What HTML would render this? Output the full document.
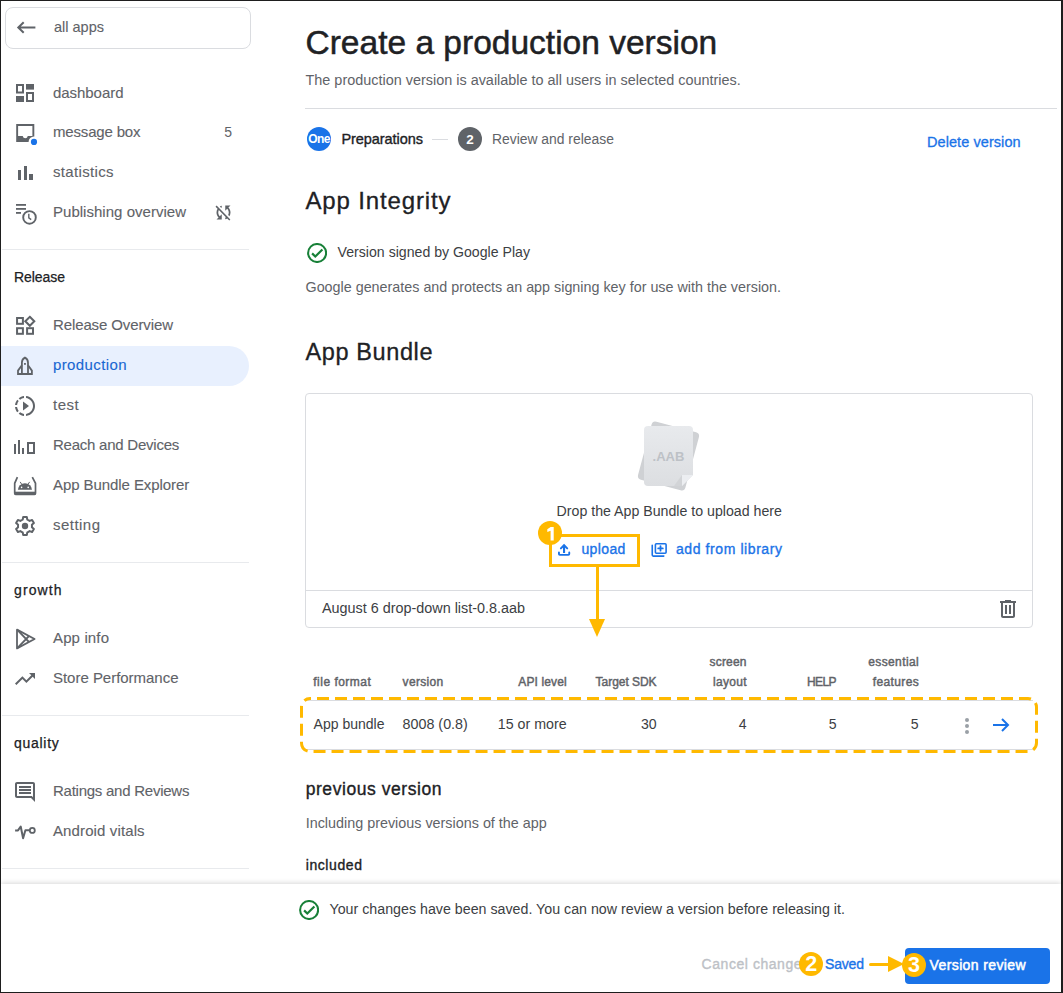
<!DOCTYPE html>
<html><head><meta charset="utf-8"><style>
html,body{margin:0;padding:0;}
body{width:1063px;height:993px;position:relative;overflow:hidden;background:#fff;font-family:"Liberation Sans", sans-serif;}
.t{position:absolute;white-space:nowrap;line-height:1;}
.frame{position:absolute;left:0;top:0;width:1060px;height:991px;border-style:solid;border-color:#1e1e1e;border-width:1px 2px 1px 1px;pointer-events:none;z-index:50;}
</style></head><body>
<div style="position:absolute;left:5px;top:7px;width:244px;height:40px;border:1px solid #dadce0;border-radius:8px;"></div>
<svg style="position:absolute;left:16px;top:20px;" width="21" height="15" viewBox="0 0 21 15"><path d="M19.4 7.5H2.5M7.7 2.2L2.3 7.5L7.7 12.8" fill="none" stroke="#5f6368" stroke-width="2"/></svg>
<div class="t" style="top:19.53px;font-size:14.500px;font-weight:400;color:#5f6368;left:54.00px;letter-spacing:0.002px;-webkit-text-stroke:0.12px #5f6368;">all apps</div>
<div class="t" style="top:84.50px;font-size:15.000px;font-weight:400;color:#5f6368;left:53.00px;letter-spacing:-0.051px;-webkit-text-stroke:0.12px #5f6368;">dashboard</div>
<div class="t" style="top:124.30px;font-size:15.000px;font-weight:400;color:#5f6368;left:53.00px;letter-spacing:-0.172px;-webkit-text-stroke:0.12px #5f6368;">message box</div>
<div class="t" style="top:164.30px;font-size:15.000px;font-weight:400;color:#5f6368;left:53.00px;letter-spacing:0.332px;-webkit-text-stroke:0.12px #5f6368;">statistics</div>
<div class="t" style="top:204.00px;font-size:15.000px;font-weight:400;color:#5f6368;left:53.00px;letter-spacing:0.023px;-webkit-text-stroke:0.12px #5f6368;">Publishing overview</div>
<div class="t" style="top:125.15px;font-size:14.000px;font-weight:400;color:#5f6368;right:831.00px;">5</div>
<svg style="position:absolute;left:16px;top:84px;" width="18" height="18" viewBox="0 0 18 18"><g fill="#5f6368"><path d="M0 0H8V9.5H0z M2 2V7.5H6V2z" fill-rule="evenodd"/><rect x="10" y="0" width="8" height="5.6"/><rect x="0" y="12" width="8" height="6"/><path d="M10 8H18V18H10z M12 10V16H16V10z" fill-rule="evenodd"/></g></svg>
<svg style="position:absolute;left:12px;top:120px;" width="28" height="28" viewBox="0 0 28 28"><defs><mask id="mb"><rect width="28" height="28" fill="#fff"/><circle cx="22" cy="21.9" r="5.4" fill="#000"/></mask></defs><g mask="url(#mb)" fill="#5f6368"><path fill-rule="evenodd" d="M4.2 3.9H22.3V21.9H4.2z M6.1 5.9V16.1H10.7Q11.2 18.3 13.25 18.3Q15.3 18.3 15.8 16.1H20.4V5.9z"/></g><circle cx="22" cy="21.9" r="3.1" fill="#1a73e8"/></svg>
<div style="position:absolute;left:18px;top:170px;width:3px;height:10px;background:#5f6368;"></div>
<div style="position:absolute;left:23.5px;top:166px;width:3.5px;height:14px;background:#5f6368;"></div>
<div style="position:absolute;left:29.3px;top:174px;width:3.5px;height:6px;background:#5f6368;"></div>
<svg style="position:absolute;left:12px;top:200px;" width="28" height="28" viewBox="0 0 28 28"><g fill="#5f6368"><rect x="4" y="4" width="10" height="1.8"/><rect x="4" y="8" width="10" height="1.8"/><rect x="4" y="12" width="5" height="1.8"/></g><circle cx="17.5" cy="17.4" r="6.3" fill="none" stroke="#5f6368" stroke-width="1.9"/><path d="M16.8 13.8V17.8L19.2 19.6" fill="none" stroke="#5f6368" stroke-width="1.4"/></svg>
<svg style="position:absolute;left:212.5px;top:201.5px;" width="21" height="21" viewBox="0 0 24 24"><path fill="#5f6368" d="M10 6.35V4.26c-.8.21-1.55.54-2.23.96l1.46 1.46c.25-.12.5-.24.77-.33zm-7.14-.94l2.36 2.36C4.45 8.990 4 10.44 4 12c0 2.21.91 4.2 2.36 5.64L4 20h6v-6l-2.24 2.24C6.68 15.15 6 13.66 6 12c0-1 .25-1.94.68-2.77l8.08 8.08c-.25.13-.5.25-.77.34v2.09c.8-.21 1.55-.54 2.230-.96l2.36 2.36 1.27-1.27L4.14 4.14 2.86 5.41zM20 4h-6v6l2.24-2.24C17.32 8.85 18 10.34 18 12c0 1-.25 1.94-.68 2.77l1.46 1.46C19.55 15.01 20 13.56 20 12c0-2.21-.91-4.2-2.36-5.64L20 4z"/></svg>
<div style="position:absolute;left:2px;top:249px;width:247px;height:1px;background:#e8eaed;"></div>
<div class="t" style="top:269.85px;font-size:14.000px;font-weight:400;color:#202124;left:14.00px;letter-spacing:-0.062px;-webkit-text-stroke:0.25px #202124;">Release</div>
<div style="position:absolute;left:1px;top:346px;width:248px;height:40px;background:#e8f0fe;border-radius:0 20px 20px 0;"></div>
<div class="t" style="top:317.30px;font-size:15.000px;font-weight:400;color:#5f6368;left:53.00px;letter-spacing:-0.115px;-webkit-text-stroke:0.12px #5f6368;">Release Overview</div>
<div class="t" style="top:397.30px;font-size:15.000px;font-weight:400;color:#5f6368;left:53.00px;letter-spacing:0.538px;-webkit-text-stroke:0.12px #5f6368;">test</div>
<div class="t" style="top:437.30px;font-size:15.000px;font-weight:400;color:#5f6368;left:53.00px;letter-spacing:-0.236px;-webkit-text-stroke:0.12px #5f6368;">Reach and Devices</div>
<div class="t" style="top:477.30px;font-size:15.000px;font-weight:400;color:#5f6368;left:53.00px;letter-spacing:-0.072px;-webkit-text-stroke:0.12px #5f6368;">App Bundle Explorer</div>
<div class="t" style="top:517.30px;font-size:15.000px;font-weight:400;color:#5f6368;left:53.00px;letter-spacing:0.466px;-webkit-text-stroke:0.12px #5f6368;">setting</div>
<div class="t" style="top:357.30px;font-size:15.000px;font-weight:400;color:#1967d2;left:53.00px;letter-spacing:0.393px;-webkit-text-stroke:0.12px #1967d2;">production</div>
<svg style="position:absolute;left:12px;top:312px;" width="26" height="26" viewBox="0 0 26 26"><g fill="none" stroke="#5f6368" stroke-width="2"><rect x="5.06" y="6" width="5.84" height="5.8"/><rect x="5.06" y="16.2" width="5.84" height="5.6"/><rect x="15.1" y="16.2" width="5.9" height="5.6"/><path d="M17.8 4.8L22.3 9.3L17.8 13.8L13.3 9.3z"/></g></svg>
<svg style="position:absolute;left:12px;top:352px;" width="26" height="26" viewBox="0 0 26 26"><g fill="none" stroke="#5f6368" stroke-width="1.8" stroke-linejoin="miter"><path d="M9.9 22V10.6C9.9 8.3 11.1 6.5 12.95 5.6C14.8 6.5 16 8.3 16 10.6V22"/><path d="M9.9 13.3L6 18.6V22.0H19.9V18.6L16 13.3"/></g><rect x="12.05" y="11" width="1.8" height="1.8" fill="#5f6368"/></svg>
<svg style="position:absolute;left:12.9px;top:393.9px;" width="24" height="24" viewBox="0 0 24 24"><path fill="#5f6368" d="M13.05 9.79L10 7.5v9l3.05-2.29L16 12zM11 4.07V2.05c-2.01.2-3.84 1-5.32 2.21L7.1 5.69c1.110-.86 2.44-1.44 3.9-1.62zM5.69 7.1L4.26 5.68C3.05 7.16 2.25 8.99 2.05 11h2.02c.18-1.46.76-2.79 1.62-3.9zM4.07 13H2.05c.2 2.01 1 3.84 2.21 5.32l1.43-1.43c-.86-1.1-1.44-2.43-1.62-3.89zm1.61 6.74C7.16 20.95 9 21.75 11 21.95v-2.02c-1.46-.18-2.79-.76-3.9-1.62l-1.42 1.43zM22 12c0 5.16-3.92 9.42-8.95 9.95v-2.02C16.970 19.41 20 16.05 20 12s-3.03-7.41-6.95-7.93V2.05C18.08 2.58 22 6.84 22 12z"/></svg>
<div style="position:absolute;left:14px;top:444px;width:2px;height:10px;background:#5f6368;"></div>
<div style="position:absolute;left:18px;top:440px;width:2px;height:14px;background:#5f6368;"></div>
<div style="position:absolute;left:22.2px;top:448.3px;width:2px;height:5.7px;background:#5f6368;"></div>
<div style="position:absolute;left:27.2px;top:442px;width:7.8px;height:11.8px;border:2px solid #5f6368;box-sizing:border-box;"></div>
<svg style="position:absolute;left:12px;top:472px;" width="28" height="28" viewBox="0 0 28 28"><g fill="none" stroke="#5f6368" stroke-width="1.7"><path d="M5.4 5.2L2.7 11.3V21.3Q2.7 22.3 3.7 22.3H22.5Q23.5 22.3 23.5 21.3V11.3L20.3 5.2"/></g><rect x="2.7" y="19.7" width="20.8" height="2.9" fill="#5f6368"/><path d="M5.9 17.8A7.05 6.5 0 0 1 20 17.8z" fill="#5f6368"/><path d="M8.2 9.9L9.9 12.6M17.6 9.9L15.9 12.6" stroke="#5f6368" stroke-width="1"/><circle cx="9.6" cy="15.4" r="0.8" fill="#fff"/><circle cx="16.2" cy="15.4" r="0.8" fill="#fff"/></svg>
<svg style="position:absolute;left:13px;top:514px;" width="24" height="24" viewBox="0 0 24 24"><path fill="none" stroke="#5f6368" stroke-width="2" stroke-linejoin="round" d="M10.2 3H13.8L14.3 5.6Q15.6 6.1 16.6 6.9L19.1 6L20.9 9.1L18.9 10.8Q19.1 12 18.9 13.2L20.9 14.9L19.1 18L16.6 17.1Q15.6 17.9 14.3 18.4L13.8 21H10.2L9.7 18.4Q8.4 17.9 7.4 17.1L4.9 18L3.1 14.9L5.1 13.2Q4.9 12 5.1 10.8L3.1 9.1L4.9 6L7.4 6.9Q8.4 6.1 9.7 5.6z"/><circle cx="12" cy="12" r="3.2" fill="#5f6368"/></svg>
<div style="position:absolute;left:2px;top:562px;width:247px;height:1px;background:#e8eaed;"></div>
<div class="t" style="top:582.65px;font-size:14.000px;font-weight:400;color:#202124;left:14.00px;letter-spacing:1.094px;-webkit-text-stroke:0.25px #202124;">growth</div>
<div class="t" style="top:629.70px;font-size:15.000px;font-weight:400;color:#5f6368;left:53.00px;letter-spacing:0.136px;-webkit-text-stroke:0.12px #5f6368;">App info</div>
<div class="t" style="top:669.80px;font-size:15.000px;font-weight:400;color:#5f6368;left:53.00px;letter-spacing:-0.024px;-webkit-text-stroke:0.12px #5f6368;">Store Performance</div>
<svg style="position:absolute;left:12px;top:626px;" width="26" height="26" viewBox="0 0 26 26"><g fill="none" stroke="#5f6368" stroke-width="1.8" stroke-linejoin="round"><path d="M5 3.6V22.4L22.6 13z"/><path d="M5.3 3.9L17 16M5.3 22.1L17 10"/></g></svg>
<svg style="position:absolute;left:12.8px;top:666.8px;" width="24" height="24" viewBox="0 0 24 24"><path fill="#5f6368" d="M16 6l2.29 2.29-4.88 4.88-4-4L2 16.59 3.41 18l6-6 4 4 6.3-6.29L22 12V6z"/></svg>
<div style="position:absolute;left:2px;top:715px;width:247px;height:1px;background:#e8eaed;"></div>
<div class="t" style="top:736.05px;font-size:14.000px;font-weight:400;color:#202124;left:14.00px;letter-spacing:0.722px;-webkit-text-stroke:0.25px #202124;">quality</div>
<div class="t" style="top:783.20px;font-size:15.000px;font-weight:400;color:#5f6368;left:53.00px;letter-spacing:-0.250px;-webkit-text-stroke:0.12px #5f6368;">Ratings and Reviews</div>
<div class="t" style="top:822.70px;font-size:15.000px;font-weight:400;color:#5f6368;left:53.00px;letter-spacing:0.119px;-webkit-text-stroke:0.12px #5f6368;">Android vitals</div>
<svg style="position:absolute;left:13.3px;top:780px;" width="24" height="24" viewBox="0 0 24 24"><path fill="#5f6368" d="M21.99 4c0-1.1-.89-2-1.99-2H4c-1.1 0-2 .9-2 2v12c0 1.1.9 2 2 2h14l4 4-.01-18zM20 4v13.17L18.83 16H4V4h16zM6 12h12v2H6zm0-3h12v2H6zm0-3h12v2H6z"/></svg>
<svg style="position:absolute;left:12px;top:819px;" width="28" height="28" viewBox="0 0 28 28"><path d="M3.1 11.4H6L8.7 7.5L11.1 19.2L13.4 11.3H17.5" fill="none" stroke="#5f6368" stroke-width="2" stroke-linejoin="round"/><circle cx="20.3" cy="11.4" r="2.5" fill="none" stroke="#5f6368" stroke-width="1.8"/></svg>
<div style="position:absolute;left:2px;top:868px;width:247px;height:1px;background:#e8eaed;"></div>
<div class="t" style="top:25.91px;font-size:33.537px;font-weight:400;color:#202124;left:305.50px;-webkit-text-stroke:0.5px #202124;">Create a production version</div>
<div class="t" style="top:72.78px;font-size:14.438px;font-weight:400;color:#5f6368;left:305.50px;">The production version is available to all users in selected countries.</div>
<div style="position:absolute;left:305px;top:108px;width:752px;height:1px;background:#dadce0;"></div>
<div style="position:absolute;left:307px;top:127px;width:24px;height:24px;background:#1a73e8;border-radius:50%;"></div>
<div class="t" style="top:133.34px;font-size:12.000px;font-weight:700;color:#fff;left:319.00px;transform:translateX(-50%);letter-spacing:-0.6px;">One</div>
<div class="t" style="top:131.93px;font-size:14.500px;font-weight:400;color:#202124;left:341.40px;letter-spacing:-0.056px;-webkit-text-stroke:0.35px #202124;">Preparations</div>
<div style="position:absolute;left:432px;top:139px;width:16px;height:1px;background:#dadce0;"></div>
<div style="position:absolute;left:458px;top:127px;width:24px;height:24px;background:#5f6368;border-radius:50%;"></div>
<div class="t" style="top:132.77px;font-size:13.500px;font-weight:700;color:#fff;left:470.00px;transform:translateX(-50%);">2</div>
<div class="t" style="top:133.34px;font-size:13.890px;font-weight:400;color:#5f6368;left:492.00px;">Review and release</div>
<div class="t" style="top:135.13px;font-size:14.500px;font-weight:400;color:#1a73e8;right:42.33px;letter-spacing:0.070px;-webkit-text-stroke:0.3px #1a73e8;">Delete version</div>
<div class="t" style="top:188.58px;font-size:24.000px;font-weight:400;color:#202124;left:305.50px;letter-spacing:0.854px;-webkit-text-stroke:0.3px #202124;">App Integrity</div>
<svg style="position:absolute;left:307px;top:243px;" width="20" height="20" viewBox="0 0 20 20"><circle cx="10.1" cy="10" r="9" fill="none" stroke="#188038" stroke-width="2.05"/><path d="M5.1 10.4L8.3 13.5L15.4 6.5" fill="none" stroke="#188038" stroke-width="2.2"/></svg>
<div class="t" style="top:244.83px;font-size:14.139px;font-weight:400;color:#3c4043;left:337.60px;">Version signed by Google Play</div>
<div class="t" style="top:280.47px;font-size:14.334px;font-weight:400;color:#5f6368;left:305.50px;">Google generates and protects an app signing key for use with the version.</div>
<div class="t" style="top:340.61px;font-size:23.500px;font-weight:400;color:#202124;left:305.50px;letter-spacing:0.608px;-webkit-text-stroke:0.3px #202124;">App Bundle</div>
<div style="position:absolute;left:305px;top:393px;width:726px;height:233px;border:1px solid #dadce0;border-radius:4px;"></div>
<div style="position:absolute;left:306px;top:590px;width:726px;height:1px;background:#dadce0;"></div>
<div class="t" style="top:503.79px;font-size:14.188px;font-weight:400;color:#3c4043;left:556.60px;">Drop the App Bundle to upload here</div>
<div class="t" style="top:600.83px;font-size:14.380px;font-weight:400;color:#3c4043;left:322.00px;">August 6 drop-down list-0.8.aab</div>
<div style="position:absolute;left:644px;top:426px;width:49px;height:60px;"><div style="position:absolute;left:0;top:0;width:49px;height:60px;background:#cfd1d4;border-radius:4px;transform:rotate(15deg);transform-origin:50% 50%;"></div><svg style="position:absolute;left:0;top:0" width="49" height="60" viewBox="0 0 49 60"><defs><linearGradient id="pg" x1="0" y1="0" x2="0" y2="1"><stop offset="0" stop-color="#e8eaed"/><stop offset="1" stop-color="#dcdee1"/></linearGradient></defs><path d="M4 0H45Q49 0 49 4V49L38 60H4Q0 60 0 56V4Q0 0 4 0z" fill="url(#pg)"/><path d="M38 49L38 60L30 60z" fill="#d2d4d7"/><path d="M38 49H49L38 60z" fill="#eceef1"/></svg><div class="t" style="left:0;width:49px;text-align:center;top:24px;font-size:13px;font-weight:700;color:#bdc1c6;line-height:1;">.AAB</div></div>
<svg style="position:absolute;left:553px;top:538px;" width="22" height="22" viewBox="0 0 22 22"><g fill="none" stroke="#1a73e8" stroke-width="1.9"><path d="M5.95 14.5V16Q5.95 16.85 6.8 16.85H15.4Q16.25 16.85 16.25 16V14.5" stroke-linecap="round"/><path d="M11.05 15V7.2" stroke-width="2.1"/><path d="M7.9 10.4L11.05 7.2L14.2 10.4" stroke-width="2" stroke-linecap="round"/></g></svg>
<div class="t" style="top:542.15px;font-size:14.000px;font-weight:400;color:#1a73e8;left:581.40px;letter-spacing:0.391px;-webkit-text-stroke:0.35px #1a73e8;">upload</div>
<svg style="position:absolute;left:650px;top:541px;" width="18" height="18" viewBox="0 0 18 18"><g fill="none" stroke="#1a73e8" stroke-width="1.6"><path d="M2.25 4.2V14.1Q2.25 15.1 3.25 15.1H13.8" stroke-linecap="round"/><rect x="5.4" y="2.7" width="10.7" height="9.6" rx="1"/></g><path d="M10.5 5.1V9.7M8.2 7.4H12.8" stroke="#1a73e8" stroke-width="1.8" stroke-linecap="round"/></svg>
<div class="t" style="top:542.15px;font-size:14.000px;font-weight:400;color:#1a73e8;left:676.00px;letter-spacing:0.582px;-webkit-text-stroke:0.35px #1a73e8;">add from library</div>
<svg style="position:absolute;left:996px;top:597px;" width="24" height="24" viewBox="0 0 24 24"><path fill="#5f6368" d="M15 4V3H9v1H4v2h1v13c0 1.1.9 2 2 2h10c1.1 0 2-.9 2-2V6h1V4h-5zm2 15H7V6h10v13zM9 8h2v9H9zm4 0h2v9h-2z"/></svg>
<div style="position:absolute;left:549px;top:534px;width:85px;height:27px;border:3px solid #ffb900;"></div>
<div style="position:absolute;left:596px;top:567px;width:3px;height:53px;background:#ffb900;"></div>
<svg style="position:absolute;left:589px;top:619px;" width="16" height="18" viewBox="0 0 16 18"><path d="M0 0H16L8 18z" fill="#ffb900"/></svg>
<div style="position:absolute;left:538px;top:521px;width:24px;height:24px;background:#ffb900;border-radius:50%;"></div>
<svg style="position:absolute;left:538px;top:521px;" width="24" height="24" viewBox="0 0 24 24"><path d="M12.6 5.9H15.7V19.4H12.6V9.7L9.3 11V8.3z" fill="#fff"/></svg>
<div class="t" style="top:675.64px;font-size:12.000px;font-weight:400;color:#5f6368;left:313.30px;letter-spacing:0.481px;-webkit-text-stroke:0.45px #5f6368;">file format</div>
<div class="t" style="top:675.64px;font-size:12.000px;font-weight:400;color:#5f6368;left:402.60px;letter-spacing:0.319px;-webkit-text-stroke:0.45px #5f6368;">version</div>
<div class="t" style="top:675.64px;font-size:12.000px;font-weight:400;color:#5f6368;right:496.28px;letter-spacing:0.118px;-webkit-text-stroke:0.45px #5f6368;">API level</div>
<div class="t" style="top:675.64px;font-size:12.000px;font-weight:400;color:#5f6368;right:406.44px;letter-spacing:-0.040px;-webkit-text-stroke:0.45px #5f6368;">Target SDK</div>
<div class="t" style="top:655.64px;font-size:12.000px;font-weight:400;color:#5f6368;right:316.31px;letter-spacing:0.194px;-webkit-text-stroke:0.45px #5f6368;">screen</div>
<div class="t" style="top:675.64px;font-size:12.000px;font-weight:400;color:#5f6368;right:316.21px;letter-spacing:0.294px;-webkit-text-stroke:0.45px #5f6368;">layout</div>
<div class="t" style="top:675.64px;font-size:12.000px;font-weight:400;color:#5f6368;right:227.09px;letter-spacing:-0.586px;-webkit-text-stroke:0.45px #5f6368;">HELP</div>
<div class="t" style="top:655.64px;font-size:12.000px;font-weight:400;color:#5f6368;right:143.91px;letter-spacing:0.391px;-webkit-text-stroke:0.45px #5f6368;">essential</div>
<div class="t" style="top:675.64px;font-size:12.000px;font-weight:400;color:#5f6368;right:143.94px;letter-spacing:0.363px;-webkit-text-stroke:0.45px #5f6368;">features</div>
<div style="position:absolute;left:305px;top:700px;width:728px;height:1px;background:#dadce0;"></div>
<div style="position:absolute;left:305px;top:749px;width:728px;height:1px;background:#dadce0;"></div>
<div class="t" style="top:716.92px;font-size:14.035px;font-weight:400;color:#3c4043;left:313.60px;">App bundle</div>
<div class="t" style="top:716.69px;font-size:14.308px;font-weight:400;color:#3c4043;left:402.60px;">8008 (0.8)</div>
<div class="t" style="top:716.75px;font-size:14.233px;font-weight:400;color:#3c4043;right:496.40px;">15 or more</div>
<div class="t" style="top:716.86px;font-size:14.100px;font-weight:400;color:#3c4043;right:406.40px;">30</div>
<div class="t" style="top:716.86px;font-size:14.100px;font-weight:400;color:#3c4043;right:316.50px;">4</div>
<div class="t" style="top:716.86px;font-size:14.100px;font-weight:400;color:#3c4043;right:226.50px;">5</div>
<div class="t" style="top:716.86px;font-size:14.100px;font-weight:400;color:#3c4043;right:144.30px;">5</div>
<div style="position:absolute;left:965px;top:718px;width:4px;height:4px;background:#9aa0a6;border-radius:50%;"></div>
<div style="position:absolute;left:965px;top:724px;width:4px;height:4px;background:#9aa0a6;border-radius:50%;"></div>
<div style="position:absolute;left:965px;top:730px;width:4px;height:4px;background:#9aa0a6;border-radius:50%;"></div>
<svg style="position:absolute;left:991px;top:717px;" width="20" height="16" viewBox="0 0 20 16"><path d="M2 8H17M11 2L17 8L11 14" fill="none" stroke="#1a73e8" stroke-width="2"/></svg>
<svg style="position:absolute;left:300px;top:697px" width="739" height="56"><rect x="1.5" y="1.5" width="735" height="53" rx="8.5" ry="8.5" fill="none" stroke="#ffb900" stroke-width="3" stroke-dasharray="12 6" stroke-dashoffset="-7"/></svg>
<div class="t" style="top:781.09px;font-size:17.500px;font-weight:400;color:#202124;left:305.70px;letter-spacing:0.559px;-webkit-text-stroke:0.35px #202124;">previous version</div>
<div class="t" style="top:815.83px;font-size:14.376px;font-weight:400;color:#5f6368;left:305.70px;">Including previous versions of the app</div>
<div class="t" style="top:857.95px;font-size:14.000px;font-weight:400;color:#202124;left:305.70px;letter-spacing:0.592px;-webkit-text-stroke:0.35px #202124;">included</div>
<div style="position:absolute;left:1px;top:884px;width:1060px;height:108px;background:#fff;box-shadow:0 -1px 5px rgba(0,0,0,0.16);"></div>
<svg style="position:absolute;left:299px;top:900px;" width="20" height="20" viewBox="0 0 20 20"><circle cx="10.1" cy="10" r="9" fill="none" stroke="#188038" stroke-width="2.05"/><path d="M5.1 10.4L8.3 13.5L15.4 6.5" fill="none" stroke="#188038" stroke-width="2.2"/></svg>
<div class="t" style="top:902.04px;font-size:14.249px;font-weight:400;color:#3c4043;left:329.50px;">Your changes have been saved. You can now review a version before releasing it.</div>
<div style="position:absolute;left:905px;top:948px;width:145px;height:36px;background:#1a73e8;border-radius:4px;"></div>
<div class="t" style="top:958.15px;font-size:14.000px;font-weight:400;color:#fff;left:929.60px;letter-spacing:0.381px;-webkit-text-stroke:0.5px #fff;">Version review</div>
<div class="t" style="top:956.85px;font-size:14.000px;font-weight:400;color:#bdc1c6;left:701.60px;letter-spacing:0.549px;-webkit-text-stroke:0.35px #bdc1c6;">Cancel change</div>
<div class="t" style="top:956.85px;font-size:14.000px;font-weight:400;color:#1a73e8;left:825.00px;letter-spacing:-0.176px;-webkit-text-stroke:0.35px #1a73e8;">Saved</div>
<div style="position:absolute;left:799px;top:952px;width:24px;height:24px;background:#ffb900;border-radius:50%;"></div>
<div class="t" style="top:953.80px;font-size:21.500px;font-weight:700;color:#fff;left:811.20px;transform:translateX(-50%);">2</div>
<div style="position:absolute;left:868.5px;top:962.5px;width:22px;height:3px;background:#ffb900;border-radius:1.5px 0 0 1.5px;"></div>
<svg style="position:absolute;left:888px;top:956px;" width="16" height="16" viewBox="0 0 16 16"><path d="M0 0L16 8L0 16z" fill="#ffb900"/></svg>
<div style="position:absolute;left:902px;top:953px;width:24px;height:24px;background:#ffb900;border-radius:50%;"></div>
<div class="t" style="top:954.60px;font-size:21.500px;font-weight:700;color:#fff;left:914.00px;transform:translateX(-50%);">3</div>
<div class="frame"></div>
</body></html>
